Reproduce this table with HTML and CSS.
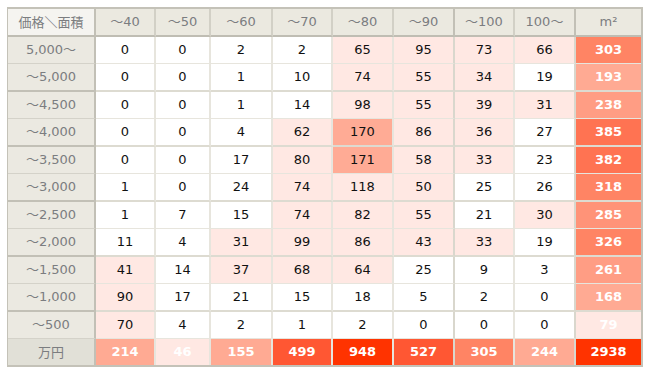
FILE: index.html
```html
<!DOCTYPE html>
<html lang="ja">
<head>
<meta charset="utf-8">
<title>価格×面積</title>
<link rel="stylesheet" href="styles.css">
</head>
<body>
<table class="grid">
<thead>
<tr>
<th class="corner">価格＼面積</th>
<th>～40</th><th>～50</th><th>～60</th><th>～70</th><th>～80</th><th class="sep">～90</th><th>～100</th><th class="sep">100～</th><th class="last">m²</th>
</tr>
</thead>
<tbody>
<tr><th>5,000～</th><td>0</td><td>0</td><td>2</td><td>2</td><td class="p1">65</td><td class="p1 sep">95</td><td class="p1">73</td><td class="p1 sep">66</td><td class="tot c4">303</td></tr>
<tr class="grp"><th>～5,000</th><td>0</td><td>0</td><td>1</td><td>10</td><td class="p1">74</td><td class="p1 sep">55</td><td class="p1">34</td><td class="sep">19</td><td class="tot c2">193</td></tr>
<tr><th>～4,500</th><td>0</td><td>0</td><td>1</td><td>14</td><td class="p1">98</td><td class="p1 sep">55</td><td class="p1">39</td><td class="p1 sep">31</td><td class="tot c3">238</td></tr>
<tr class="grp"><th>～4,000</th><td>0</td><td>0</td><td>4</td><td class="p1">62</td><td class="p2">170</td><td class="p1 sep">86</td><td class="p1">36</td><td class="sep">27</td><td class="tot c5">385</td></tr>
<tr><th>～3,500</th><td>0</td><td>0</td><td>17</td><td class="p1">80</td><td class="p2">171</td><td class="p1 sep">58</td><td class="p1">33</td><td class="sep">23</td><td class="tot c5">382</td></tr>
<tr class="grp"><th>～3,000</th><td>1</td><td>0</td><td>24</td><td class="p1">74</td><td class="p1">118</td><td class="p1 sep">50</td><td>25</td><td class="sep">26</td><td class="tot c4">318</td></tr>
<tr><th>～2,500</th><td>1</td><td>7</td><td>15</td><td class="p1">74</td><td class="p1">82</td><td class="p1 sep">55</td><td>21</td><td class="p1 sep">30</td><td class="tot c3b">285</td></tr>
<tr class="grp"><th>～2,000</th><td>11</td><td>4</td><td class="p1">31</td><td class="p1">99</td><td class="p1">86</td><td class="p1 sep">43</td><td class="p1">33</td><td class="sep">19</td><td class="tot c4">326</td></tr>
<tr><th>～1,500</th><td class="p1">41</td><td>14</td><td class="p1">37</td><td class="p1">68</td><td class="p1">64</td><td class="sep">25</td><td>9</td><td class="sep">3</td><td class="tot c3">261</td></tr>
<tr class="grp"><th>～1,000</th><td class="p1">90</td><td>17</td><td>21</td><td>15</td><td>18</td><td class="sep">5</td><td>2</td><td class="sep">0</td><td class="tot c2">168</td></tr>
<tr><th>～500</th><td class="p1">70</td><td>4</td><td>2</td><td>1</td><td>2</td><td class="sep">0</td><td>0</td><td class="sep">0</td><td class="tot c1">79</td></tr>
<tr class="sum"><th class="unit">万円</th><td class="tot c2">214</td><td class="tot c1">46</td><td class="tot c2">155</td><td class="tot c6">499</td><td class="tot c7">948</td><td class="tot c6 sep">527</td><td class="tot c4">305</td><td class="tot c2 sep">244</td><td class="tot c7">2938</td></tr>
</tbody>
</table>
</body>
</html>
```

FILE: styles.css
```css
html, body {
  margin: 0;
  padding: 0;
  background: #ffffff;
}

body {
  padding: 7px 0 0 7px;
  font-family: "DejaVu Sans", "Noto Sans CJK JP", sans-serif;
  font-size: 13px;
}

.grid {
  border-collapse: separate;
  border-spacing: 0;
  table-layout: fixed;
  width: 636px;
  border-top: 2px solid #c4c2b8;
  border-left: 1px solid #c4c2b8;
  border-right: 2px solid #c4c2b8;
  border-bottom: 2px solid #c4c2b8;
}

.grid th,
.grid td {
  box-sizing: border-box;
  padding: 0;
  height: 26px;
  line-height: 26px;
  text-align: center;
  white-space: nowrap;
  overflow: hidden;
}

/* column widths (first row) */
.grid thead th:nth-child(1) { width: 88px; }
.grid thead th:nth-child(2) { width: 60px; }
.grid thead th:nth-child(3) { width: 55px; }
.grid thead th:nth-child(4) { width: 62px; }
.grid thead th:nth-child(5) { width: 60px; }
.grid thead th:nth-child(6) { width: 61px; }
.grid thead th:nth-child(7) { width: 61px; }
.grid thead th:nth-child(8) { width: 60px; }
.grid thead th:nth-child(9) { width: 61px; }
.grid thead th:nth-child(10) { width: 65px; }

/* header row */
.grid thead th {
  height: 28px;
  background: #ebe9e0;
  color: #7b7d80;
  font-weight: normal;
  border-right: 2px solid #d2d0c6;
  border-bottom: 2px solid #bfbdb3;
}
.grid thead th.corner {
  background: #f5f4f0;
  border-right: 2px solid #c2c0b6;
  font-family: "Noto Sans CJK JP", sans-serif;
  letter-spacing: 0;
}
.grid thead th.sep {
  border-right-color: #c2c0b6;
}
.grid thead th.last {
  border-right: 0;
}

/* left column */
.grid tbody th {
  height: 27px;
  background: #ebe9e1;
  color: #7b7d80;
  font-weight: normal;
  border-right: 2px solid #c2c0b6;
  border-bottom: 1px solid #d4d2c9;
}
.grid tbody tr.grp th {
  height: 28px;
  border-bottom: 2px solid #c2c0b6;
}
.grid tbody th.unit {
  background: #e1e0d7;
  font-family: "Noto Sans CJK JP", sans-serif;
}

/* data cells */
.grid td {
  height: 27px;
  color: #111111;
  background: #ffffff;
  border-right: 2px solid #e7e5dd;
  border-bottom: 1px solid #e7e5dd;
}
.grid tr.grp td {
  height: 28px;
  border-bottom: 2px solid #dddbd1;
}
.grid td.sep {
  border-right-color: #d9d7cd;
}
.grid td:last-child {
  border-right: 0;
}
.grid tr.sum th,
.grid tr.sum td {
  height: 26px;
  border-bottom: 0;
}

.p1 { background: #ffe8e3 !important; }
.p2 { background: #ffab95 !important; }

.tot {
  color: #ffffff !important;
  font-weight: bold;
  font-size: 13px;
}
.c1 { background: #ffe8e3 !important; }
.c2 { background: #ffaa93 !important; }
.c3 { background: #ff9d84 !important; }
.c3b { background: #ff9378 !important; }
.c4 { background: #ff8464 !important; }
.c5 { background: #ff7352 !important; }
.c6 { background: #ff5733 !important; }
.c7 { background: #ff3300 !important; }
```
